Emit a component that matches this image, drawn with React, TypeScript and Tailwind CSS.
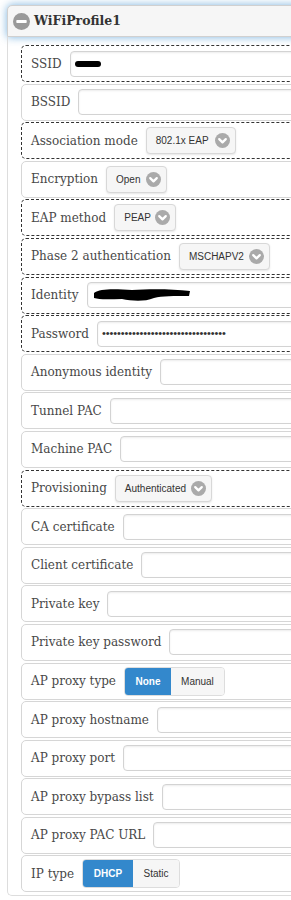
import * as React from "react";

type Field =
  | { label: string; kind: "input"; dirty?: boolean; blob?: "ssid" | "identity"; password?: boolean }
  | { label: string; kind: "select"; value: string; width: number; dirty?: boolean }
  | { label: string; kind: "toggle"; options: [string, number][] };

const fields: Field[] = [
  { label: "SSID", kind: "input", dirty: true, blob: "ssid" },
  { label: "BSSID", kind: "input" },
  { label: "Association mode", kind: "select", value: "802.1x EAP", width: 90, dirty: true },
  { label: "Encryption", kind: "select", value: "Open", width: 61 },
  { label: "EAP method", kind: "select", value: "PEAP", width: 62, dirty: true },
  { label: "Phase 2 authentication", kind: "select", value: "MSCHAPV2", width: 91, dirty: true },
  { label: "Identity", kind: "input", dirty: true, blob: "identity" },
  { label: "Password", kind: "input", dirty: true, password: true },
  { label: "Anonymous identity", kind: "input" },
  { label: "Tunnel PAC", kind: "input" },
  { label: "Machine PAC", kind: "input" },
  { label: "Provisioning", kind: "select", value: "Authenticated", width: 97, dirty: true },
  { label: "CA certificate", kind: "input" },
  { label: "Client certificate", kind: "input" },
  { label: "Private key", kind: "input" },
  { label: "Private key password", kind: "input" },
  { label: "AP proxy type", kind: "toggle", options: [["None", 46], ["Manual", 53]] },
  { label: "AP proxy hostname", kind: "input" },
  { label: "AP proxy port", kind: "input" },
  { label: "AP proxy bypass list", kind: "input" },
  { label: "AP proxy PAC URL", kind: "input" },
  { label: "IP type", kind: "toggle", options: [["DHCP", 50], ["Static", 46]] },
];

const Chevron = () => (
  <svg width="15" height="15" viewBox="0 0 16 16" className="shrink-0">
    <circle cx="8" cy="8" r="8" fill="#aaaaaa" />
    <path d="M4.5 6.5 L8 10 L11.5 6.5" stroke="#fff" strokeWidth="2.4" fill="none" strokeLinecap="round" strokeLinejoin="round" />
  </svg>
);

const Row = ({ f }: { f: Field }) => {
  const dirty = f.kind !== "toggle" && f.dirty;
  return (
    <div
      className={
        "flex items-center h-[37px] pl-[9px] rounded-[5px] bg-white " +
        (dirty ? "border border-dashed border-[#333]" : "border border-[#d6d6d6]")
      }
    >
      <span className="whitespace-nowrap text-[12px] text-[#484848] mr-[8px]">{f.label}</span>
      {f.kind === "input" && (
        <div className="relative flex-1 h-[26px] rounded-[4px] border border-[#d3d3d3] bg-white shadow-[inset_0_1px_2px_rgba(0,0,0,0.08)] flex items-center pl-[4px]">
          {f.blob === "ssid" && <div className="w-[26px] h-[6px] rounded-full bg-black" />}
          {f.blob === "identity" && (
            <svg width="100" height="14" viewBox="0 0 100 14">
              <path d="M2 5 C8 0,25 1,40 2 C58 1,80 1,98 3 L97 8 C82 8,70 8,62 10 C52 14,40 13,30 11 C20 11,8 12,2 10 Z" fill="#000" />
            </svg>
          )}
          {f.password && (
            <span className="text-[11px] leading-none text-[#333] tracking-[-0.1px] font-['Liberation_Sans',sans-serif]">
              {"•".repeat(33)}
            </span>
          )}
        </div>
      )}
      {f.kind === "select" && (
        <div
          className="h-[27px] rounded-[4px] border border-[#d8d8d8] bg-[#f6f6f6] flex items-center justify-between pl-[9px] pr-[5px] shadow-[0_1px_2px_rgba(0,0,0,0.1)]"
          style={{ width: f.width }}
        >
          <span className="text-[10px] text-[#333] font-['Liberation_Sans',sans-serif] whitespace-nowrap">{f.value}</span>
          <Chevron />
        </div>
      )}
      {f.kind === "toggle" && (
        <div className="flex h-[29px] rounded-[4px] overflow-hidden border border-[#dddddd] font-['Liberation_Sans',sans-serif]">
          {f.options.map(([o, w], i) => (
            <div
              key={o}
              className={
                "flex items-center justify-center text-[10px] " +
                (i === 0 ? "bg-[#3388cc] text-white font-bold" : "bg-[#f6f6f6] text-[#333]")
              }
              style={{ width: w }}
            >
              {o}
            </div>
          ))}
        </div>
      )}
    </div>
  );
};

export default function App() {
  return (
    <div className="w-[291px] h-[900px] overflow-hidden bg-white font-['DejaVu_Serif',serif]">
      <div className="w-[330px] ml-[7px] mt-[5px]">
        <div className="h-[32px] flex items-center pl-[5px] bg-[#f6f6f6] border border-[#d0d0d0] rounded-tl-[5px] shadow-[0_0_9px_rgba(51,136,204,0.65)]">
          <svg width="17" height="17" viewBox="0 0 18 18" className="mr-[4px]">
            <circle cx="9" cy="9" r="9" fill="#9a9a9a" />
            <rect x="3.5" y="7.3" width="11" height="3.4" rx="0.8" fill="#fff" />
          </svg>
          <span className="text-[12.5px] font-bold text-[#333]">WiFiProfile1</span>
        </div>
        <div className="border-l border-b border-[#dddddd] rounded-bl-[5px] pl-[13px] pt-[8px] pb-[3px] flex flex-col gap-[1.6px]">
          {fields.map((f) => (
            <Row key={f.label} f={f} />
          ))}
        </div>
      </div>
    </div>
  );
}
